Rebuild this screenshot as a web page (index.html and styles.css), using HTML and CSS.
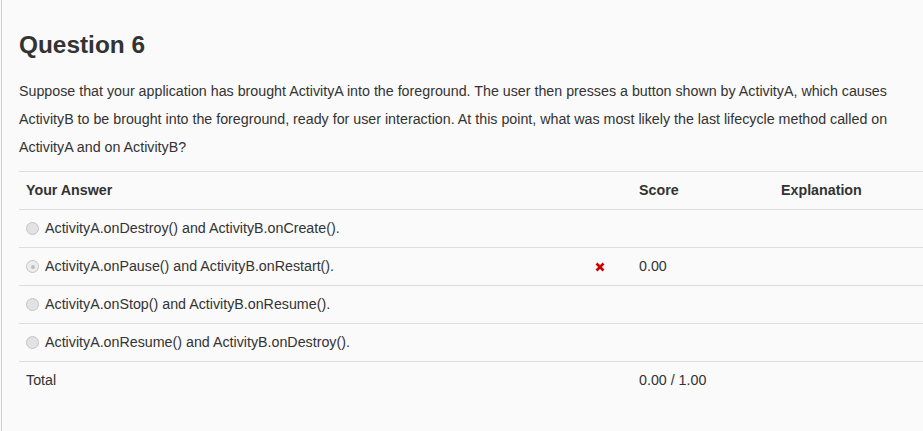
FILE: index.html
```html
<!DOCTYPE html>
<html>
<head>
<meta charset="utf-8">
<link rel="stylesheet" href="styles.css">
</head>
<body>
<div class="page">
  <h2 class="title">Question 6</h2>
  <p class="prompt">Suppose that your application has brought ActivityA into the foreground. The user then presses a button shown by ActivityA, which causes ActivityB to be brought into the foreground, ready for user interaction. At this point, what was most likely the last lifecycle method called on ActivityA and on ActivityB?</p>
  <table class="answers">
    <thead>
      <tr>
        <th class="c-answer">Your Answer</th>
        <th class="c-icon"></th>
        <th class="c-score">Score</th>
        <th class="c-expl">Explanation</th>
      </tr>
    </thead>
    <tbody>
      <tr>
        <td><span class="radio"></span>ActivityA.onDestroy() and ActivityB.onCreate().</td>
        <td></td><td></td><td></td>
      </tr>
      <tr>
        <td><span class="radio checked"></span>ActivityA.onPause() and ActivityB.onRestart().</td>
        <td class="icon-cell"><svg class="xmark" width="10" height="10" viewBox="0 0 10 10"><path d="M1.5 1.5L8.5 8.5M8.5 1.5L1.5 8.5" stroke="#c00" stroke-width="2.6" stroke-linecap="butt"/></svg></td>
        <td>0.00</td><td></td>
      </tr>
      <tr>
        <td><span class="radio"></span>ActivityA.onStop() and ActivityB.onResume().</td>
        <td></td><td></td><td></td>
      </tr>
      <tr>
        <td><span class="radio"></span>ActivityA.onResume() and ActivityB.onDestroy().</td>
        <td></td><td></td><td></td>
      </tr>
      <tr>
        <td>Total</td>
        <td></td>
        <td>0.00 / 1.00</td><td></td>
      </tr>
    </tbody>
  </table>
</div>
</body>
</html>
```

FILE: styles.css
```css
html, body {
  margin: 0;
  padding: 0;
  background: #fafafa;
  height: 100%;
}
body {
  font-family: "Liberation Sans", Arial, sans-serif;
  color: #333;
  font-size: 14.25px;
  overflow: hidden;
}
.page {
  margin-left: 1px;
  border-left: 1px solid #cfcfcf;
  padding: 30px 0 0 17px;
  min-height: 100%;
  box-sizing: border-box;
}
.title {
  margin: 0;
  font-size: 24.4px;
  line-height: 30px;
  font-weight: bold;
  color: #333;
}
.prompt {
  margin: 17px 0 0 0;
  line-height: 28px;
  padding-right: 20px;
}
.answers {
  margin-top: 10px;
  width: 100%;
  border-collapse: collapse;
  border-top: 1px solid #ddd;
  table-layout: fixed;
}
.answers th, .answers td {
  text-align: left;
  padding: 0 7px 1px 7px;
  height: 38px;
  vertical-align: middle;
  line-height: 20px;
  box-sizing: border-box;
}
.answers th {
  font-weight: bold;
  border-bottom: 1px solid #ddd;
}
.answers tbody tr td {
  border-bottom: 1px solid #ddd;
}
.answers tbody tr:last-child td {
  border-bottom: none;
}
.c-answer { width: 572px; }
.c-icon { width: 41px; }
.c-score { width: 142px; }
.answers td.icon-cell { padding: 0 0 1px 4px; }
.xmark { display: block; margin-top: 1px; }
.radio {
  display: inline-block;
  width: 11px;
  height: 11px;
  border: 1px solid #c4c4c4;
  border-radius: 50%;
  background: #e2e2e2;
  vertical-align: -2px;
  margin-right: 6px;
  position: relative;
  box-sizing: content-box;
}
.radio.checked {
  background: #ececec;
}
.radio.checked::after {
  content: "";
  position: absolute;
  left: 3.5px;
  top: 3.5px;
  width: 4px;
  height: 4px;
  border-radius: 50%;
  background: #bdbdbd;
}
```
